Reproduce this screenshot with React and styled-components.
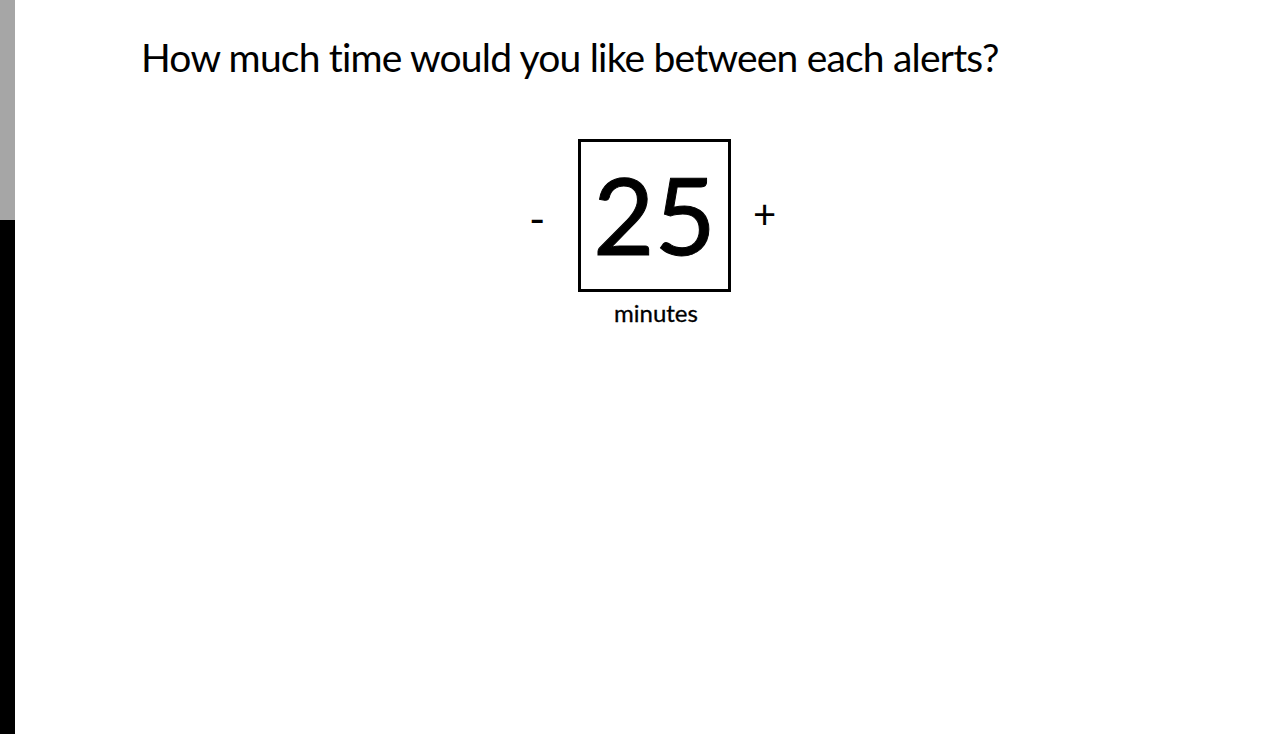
import React, { useState } from "react";
import styled, { createGlobalStyle } from "styled-components";

const GlobalStyle = createGlobalStyle`
  html, body {
    margin: 0;
    padding: 0;
    background: #fff;
  }
  body {
    font-family: "Lato", "Liberation Sans", sans-serif;
    color: #000;
  }
`;

const App = () => {
  const [minutes, setMinutes] = useState(25);
  return (
    <>
      <GlobalStyle />
      <Page>
        <ScrollRail>
          <RailThumb />
        </ScrollRail>
        <Main>
          <Question>How much time would you like between each alerts?</Question>
          <CounterSection>
            <CounterRow>
              <StepButton $side="minus" onClick={() => setMinutes((m) => Math.max(1, m - 1))}>
                -
              </StepButton>
              <ValueBox>{minutes}</ValueBox>
              <StepButton $side="plus" onClick={() => setMinutes((m) => m + 1)}>
                +
              </StepButton>
            </CounterRow>
            <UnitLabel>minutes</UnitLabel>
          </CounterSection>
        </Main>
      </Page>
    </>
  );
};

const Page = styled.div`
  display: flex;
  flex-direction: row;
  height: 100vh;
  min-height: 734px;
  overflow: hidden;
`;

const ScrollRail = styled.div`
  flex-shrink: 0;
  width: 15px;
  background-color: #000;
`;

const RailThumb = styled.div`
  height: 220px;
  background-color: #a6a6a6;
`;

const Main = styled.div`
  flex: 1;
  display: flex;
  flex-direction: column;
  padding: 33px 0 0 126px;
`;

const Question = styled.h1`
  margin: 0;
  font-size: 39px;
  font-weight: 400;
  line-height: 48px;
  letter-spacing: -0.8px;
  white-space: nowrap;
`;

const CounterSection = styled.div`
  display: flex;
  flex-direction: column;
  align-items: center;
  margin-top: 58px;
  margin-left: -116px;
`;

const CounterRow = styled.div`
  display: flex;
  flex-direction: row;
  align-items: center;
`;

const StepButton = styled.button`
  border: none;
  background: none;
  padding: 0;
  cursor: pointer;
  font-family: inherit;
  color: #000;
  font-size: ${(props) => (props.$side === "plus" ? "40px" : "44px")};
  line-height: 1;
  width: ${(props) => (props.$side === "plus" ? "23px" : "14px")};
  margin: ${(props) =>
    props.$side === "plus" ? "-4px 0 0 22px" : "4px 35px 0 0"};
`;

const ValueBox = styled.div`
  box-sizing: border-box;
  width: 153px;
  height: 153px;
  border: 3px solid #000;
  display: flex;
  align-items: center;
  justify-content: center;
  font-size: 106px;
  font-weight: 400;
  line-height: 1;
  padding-bottom: 4px;
  -webkit-text-stroke: 1px #000;
`;

const UnitLabel = styled.div`
  margin-top: 6px;
  font-size: 24px;
  line-height: 30px;
  padding-left: 7px;
  -webkit-text-stroke: 0.3px #000;
`;

export default App;
